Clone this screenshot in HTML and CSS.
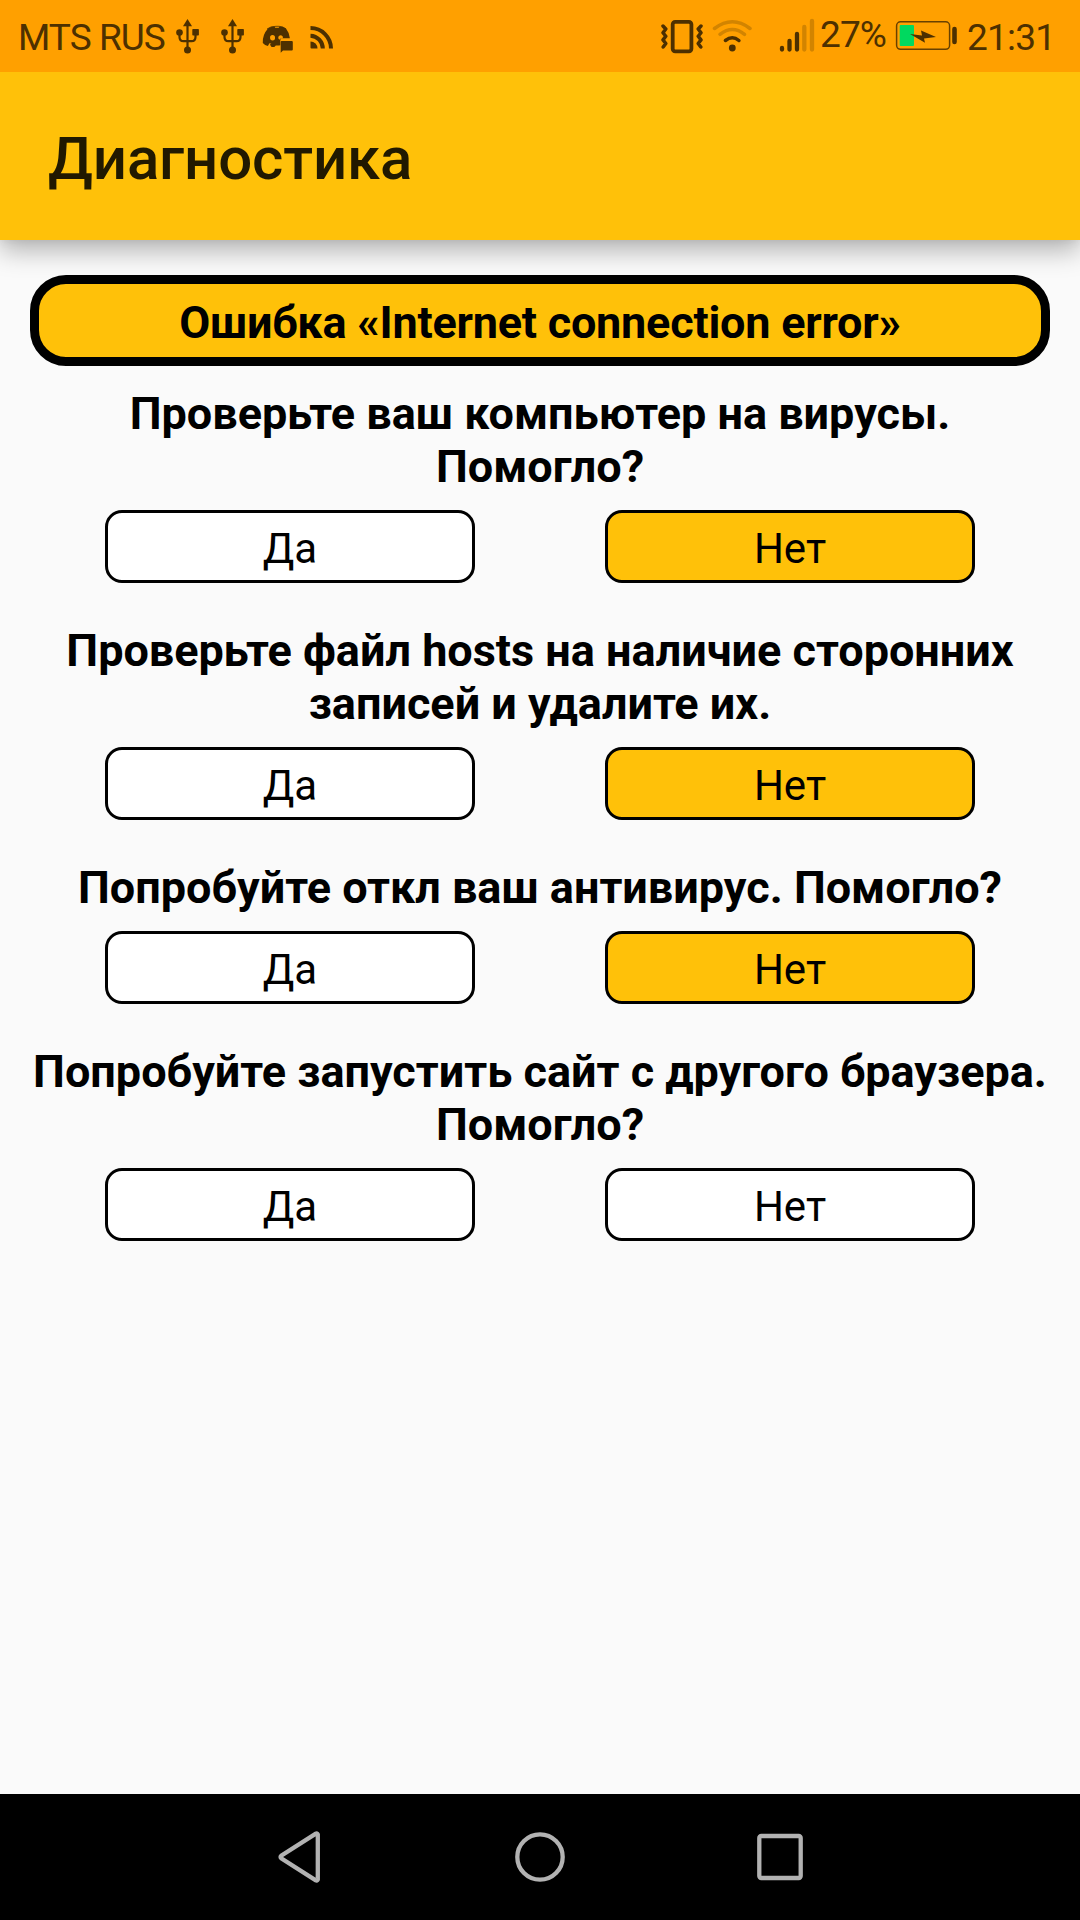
FILE: index.html
```html
<!DOCTYPE html>
<html lang="ru">
<head>
<meta charset="utf-8">
<title>Диагностика</title>
<link rel="stylesheet" href="styles.css">
</head>
<body>
<div class="status">
  <span class="carrier">MTS RUS</span>
  <svg class="usb" width="24" height="72" viewBox="0 0 24 72"><use href="#usb-icon"/>
    <defs><g id="usb-icon"><path d="M11.5 24V50M3.5 32v5q0 4.200 4 4.200h8q4 0 4-4.200v-5" fill="none" stroke="currentColor" stroke-width="2.200"/><path d="M11.500 19l4.500 7.300H7z"/><circle cx="3.500" cy="32.500" r="3.300"/><rect x="16.300" y="29" width="6.600" height="6.600" rx=".8"/><circle cx="11.500" cy="50" r="3.500"/></g></defs></svg>
  <svg class="usb" width="24" height="72" viewBox="0 0 24 72"><use href="#usb-icon"/></svg>
  <svg class="chat" width="32" height="72" viewBox="262 0 32 72"><path fill-rule="evenodd" d="M268 28.500q3-2 6.500-1.900l.7 1.200h3.500l.8-1.200q3.500 0 6.500 2 3.500 4.500 3.900 9.700H282q-1.700 0-1.700 1.700v5.200q-2 .6-4.500.2l-1.500 1.500q-2 .2-3-.1l-1.400-2.200 1.500-.8-2-.6-1.500 2.800q-3-.5-5.100-3Q262.200 35 268 28.500zM272.500 35a2.500 2.700 0 1 0 .1 5.400 2.500 2.700 0 0 0-.1-5.400zm8 .3a2.500 2.700 0 0 0-2.300 2.700l1 1.800q1-1.700 3.700-1.700a2.500 2.700 0 0 0-2.400-2.800z"/><path d="M267 29q4-3 9-2.700h3q4 0 7 2.700" fill="none" stroke="currentColor" stroke-width=".8"/><path d="M281.600 41h10.200q1 0 1 1v7.500q0 1-1 1H283l-2.300 2.300V42q0-1 .9-1z"/></svg>
  <svg class="feed" width="24" height="72" viewBox="310 0 24 72"><path d="M310.500 41.500a7 7 0 0 1 7 7h-6q-1 0-1-1z"/><path d="M310.500 35.800a12.800 12.800 0 0 1 12.300 12.800M310.500 28.100a20.500 20.500 0 0 1 20.500 20.500" fill="none" stroke="currentColor" stroke-width="4"/></svg>
  <div class="status-right">
    <svg class="vibrate" width="43" height="72" viewBox="661 0 43 72"><g fill="none" stroke="currentColor" stroke-width="3.800"><rect x="672.700" y="21.800" width="18.700" height="29.500" rx="2.500"/><path stroke-linecap="round" stroke-linejoin="round" stroke-width="3.500" d="M663 26l2.800 3-2.800 3.700 2.800 3.600-2.800 3.600 2.800 3.600-2.600 3.500M701 26l-2.800 3 2.800 3.700-2.800 3.600 2.800 3.600-2.800 3.600 2.600 3.500"/></g></svg>
    <svg class="wifi" width="40" height="72" viewBox="712 0 40 72"><g fill="none" stroke="currentColor" stroke-width="3.500" stroke-linecap="round"><path opacity=".25" d="M714.500 28.500q18-13.500 35.500 0M720 34.300q12.500-9.500 24.500 0"/><path d="M725.400 40.500q7-5.500 13.500 0"/></g><circle cx="732.300" cy="48" r="3.400"/></svg>
    <svg class="signal" width="36" height="72" viewBox="779 0 36 72"><g fill="none" stroke="currentColor" stroke-width="4.300" stroke-linecap="round"><path d="M782 48v1.500M789.500 41v8.500M797 34v15.500"/><path opacity=".25" d="M804.300 27v22.500M812 21v28.500"/></g></svg>
    <span class="percent">27%</span>
    <svg class="battery" width="63" height="72" viewBox="895 0 63 72"><rect x="896.600" y="21.800" width="53" height="27.500" rx="4" fill="none" stroke="currentColor" stroke-width="1.500" opacity=".85"/><rect class="charge" x="899.700" y="25" width="14.300" height="21" rx="1"/><path d="M910 34l12 1.500-1-5 15 6.500-12 1.500 1 4.300z"/><path d="M954.500 29v13" stroke="currentColor" stroke-width="4.600" stroke-linecap="round"/></svg>
    <span class="clock">21:31</span>
  </div>
</div>
<header class="appbar"><h1>Диагностика</h1></header>
<main class="content">
  <h2 class="banner">Ошибка «Internet connection error»</h2>
  <section class="step">
    <p>Проверьте ваш компьютер на вирусы.<br>Помогло?</p>
    <div class="answers"><button>Да</button><button class="chosen">Нет</button></div>
  </section>
  <section class="step">
    <p>Проверьте файл hosts на наличие сторонних<br>записей и удалите их.</p>
    <div class="answers"><button>Да</button><button class="chosen">Нет</button></div>
  </section>
  <section class="step">
    <p>Попробуйте откл ваш антивирус. Помогло?</p>
    <div class="answers"><button>Да</button><button class="chosen">Нет</button></div>
  </section>
  <section class="step">
    <p>Попробуйте запустить сайт с другого браузера.<br>Помогло?</p>
    <div class="answers"><button>Да</button><button>Нет</button></div>
  </section>
</main>
<nav class="navbar">
  <svg width="50" height="54" viewBox="0 0 50 54"><path d="M42.800 4.400v45.200q-.7 1.400-2 .7L6.200 28.200q-1.300-1.200 0-2.400L40.800 3.700q1.300-.7 2 .7z"/></svg>
  <svg width="54" height="54" viewBox="0 0 54 54"><circle cx="27" cy="27" r="22.700"/></svg>
  <svg width="50" height="54" viewBox="0 0 50 54"><rect x="4.300" y="6" width="41.400" height="42" rx="2"/></svg>
</nav>
</body>
</html>
```
FILE: styles.css
```css
* { box-sizing: border-box; }
body {
  margin: 0;
  width: 1080px;
  height: 1920px;
  display: flex;
  flex-direction: column;
  overflow: hidden;
  background: #fafafa;
  color: #000;
  font-family: Roboto, sans-serif;
}
h1, h2, p { margin: 0; }
svg { flex: none; }

.status {
  position: relative;
  z-index: 1;
  height: 72px;
  flex: none;
  display: flex;
  padding: 0 25px 0 18px;
  background: #ffa000;
  color: #4d3000;
  font-size: 37px;
  line-height: 75px;
  white-space: nowrap;
}
.status svg { fill: currentColor; }
.carrier { width: 158px; letter-spacing: -0.95px; }
.usb { margin-right: 21px; }
.chat { margin-left: -4px; margin-right: 16px; }
.status-right { display: flex; margin-left: auto; }
.vibrate { margin-right: 8px; }
.wifi { margin-right: 27px; }
.signal { margin-right: 5px; }
.percent { width: 75px; line-height: 69px; letter-spacing: -0.9px; }
.battery { margin-right: 9px; }
.charge { fill: #00d95f; }
.clock { width: 88px; letter-spacing: -0.75px; }

.appbar {
  height: 168px;
  flex: none;
  display: flex;
  align-items: center;
  padding: 5px 48px 0;
  background: #ffc109;
  box-shadow: 0 11px 24px rgba(0, 0, 0, .28), 0 0 10px rgba(0, 0, 0, .08);
}
.appbar h1 {
  color: #211900;
  font-size: 60px;
  line-height: 72px;
  font-weight: 500;
  letter-spacing: -0.15px;
}

.content { flex: 1; padding: 35px 30px 0; }
.banner {
  height: 91px;
  margin-bottom: 21px;
  border: 9px solid #000;
  border-radius: 36px;
  background: #ffc109;
  font-size: 45px;
  line-height: 78px;
  font-weight: 700;
  letter-spacing: -0.23px;
  text-align: center;
}
.step { margin-bottom: 41px; }
.step p {
  font-size: 45px;
  line-height: 53px;
  font-weight: 700;
  text-align: center;
  white-space: nowrap;
}
.answers {
  display: flex;
  justify-content: space-between;
  margin-top: 17px;
  padding: 0 75px;
}
.answers button {
  width: 370px;
  height: 73px;
  padding: 3px 0 0;
  border: 3px solid #000;
  border-radius: 17px;
  background: #fff;
  color: #000;
  font: 400 42px/49px Roboto, sans-serif;
}
.answers .chosen { background: #ffc109; }

.navbar {
  height: 126px;
  flex: none;
  display: flex;
  justify-content: center;
  align-items: center;
  gap: 188px;
  background: #000;
}
.navbar svg { fill: none; stroke: #b2b2b2; stroke-width: 4.300; }
```
